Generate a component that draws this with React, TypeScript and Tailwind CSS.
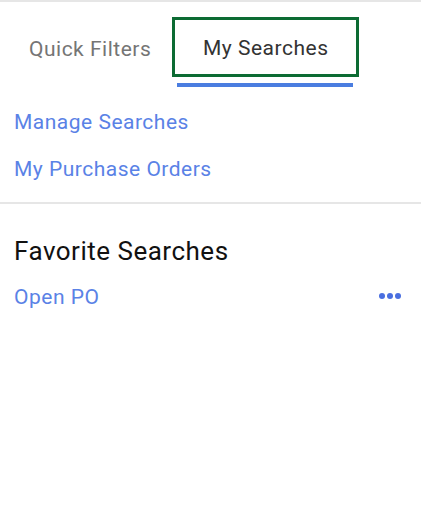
import React from 'react';

export default function App() {
  return (
    <div className="w-[421px] h-[515px] bg-white border-t-2 border-[#e6e6e6] font-['Roboto',sans-serif] tracking-[0.5px]">
      {/* Tabs */}
      <div className="flex items-start pt-[15px] pl-[29px]">
        <button className="mt-[20px] text-[21px] leading-[24px] text-[#757575] tracking-[0.5px]">Quick Filters</button>
        <div className="ml-[21px] flex flex-col">
          <div className="w-[187px] h-[60px] border-[3px] border-[#0c6b33] flex items-center justify-center pt-[2px]">
            <span className="text-[21px] leading-[24px] text-[#333]">My Searches</span>
          </div>
          <div className="ml-[5px] mt-[6px] w-[176px] h-[4px] bg-[#4a7de0]" />
        </div>
      </div>

      {/* Links */}
      <div className="flex flex-col px-[14px] pt-[22px] pb-[20px] gap-[21px] border-b-2 border-[#e6e6e6]">
        <a className="text-[21px] leading-[26px] text-[#5a82e6]">Manage Searches</a>
        <a className="text-[21px] leading-[26px] text-[#5a82e6]">My Purchase Orders</a>
      </div>

      {/* Favorites */}
      <div className="px-[14px] pt-[32px]">
        <h2 className="text-[26px] leading-[30px] text-[#111]">Favorite Searches</h2>
        <div className="mt-[18px] flex items-center justify-between pr-[6px]">
          <a className="text-[21px] leading-[26px] text-[#5a82e6]">Open PO</a>
          <div className="flex gap-[2px] -mt-[3px]">
            <span className="w-[6px] h-[6px] rounded-full bg-[#4a6fe0]" />
            <span className="w-[6px] h-[6px] rounded-full bg-[#4a6fe0]" />
            <span className="w-[6px] h-[6px] rounded-full bg-[#4a6fe0]" />
          </div>
        </div>
      </div>
    </div>
  );
}
